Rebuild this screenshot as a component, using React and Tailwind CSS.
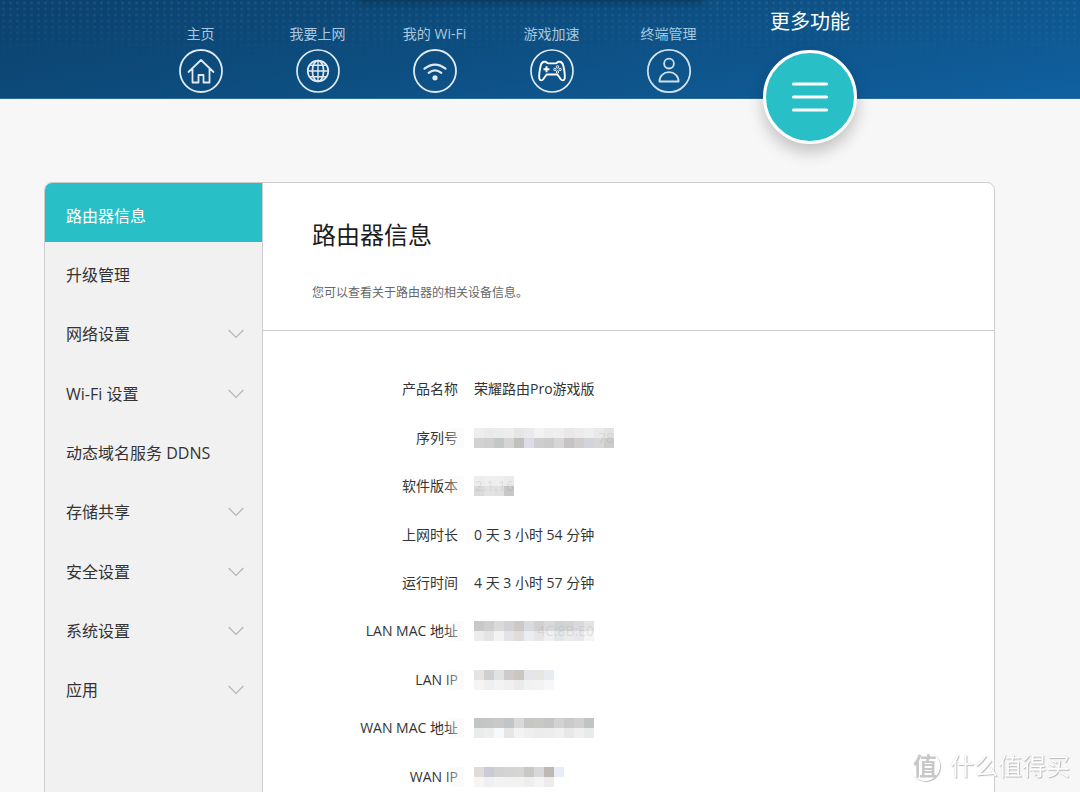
const navItems = [
  { label: '主页', icon: HomeIcon },
  { label: '我要上网', icon: GlobeIcon },
  { label: '我的 Wi-Fi', icon: WifiIcon },
  { label: '游戏加速', icon: GamepadIcon },
  { label: '终端管理', icon: UserIcon },
]

const menu = [
  { label: '路由器信息', active: true },
  { label: '升级管理' },
  { label: '网络设置', children: true },
  { label: 'Wi-Fi 设置', children: true },
  { label: '动态域名服务 DDNS' },
  { label: '存储共享', children: true },
  { label: '安全设置', children: true },
  { label: '系统设置', children: true },
  { label: '应用', children: true },
]

// masked values are drawn as two rows of 10px blocks
const info = [
  { label: '产品名称', value: '荣耀路由Pro游戏版' },
  {
    label: '序列号',
    hint: '78',
    mask: [
      ['#eeeeee', '#eaeaea', '#ececec', '#ededed', '#e6e6e6', '#eaeaea', '#f2f2f2', '#ededed', '#eeeeee', '#e8e8e8', '#ebebeb', '#eeeeee', '#e9e9e9', '#e3e3e3'],
      ['#d2d2d2', '#cfcfcf', '#c3c8c6', '#d5d5d5', '#c2c0bd', '#dcdde8', '#cfcecf', '#cdcbca', '#d6d6d6', '#c6c3c4', '#cfcdce', '#d3d3da', '#d8d6d6', '#cccccc'],
    ],
  },
  {
    label: '软件版本',
    hint: '2.1.16',
    mask: [
      ['#ededed', '#efefef', '#eeeeee', '#ebebeb'],
      ['#dadada', '#e2e2e2', '#e0e0e0', '#c8c8c8'],
    ],
  },
  { label: '上网时长', value: '0 天 3 小时 54 分钟' },
  { label: '运行时间', value: '4 天 3 小时 57 分钟' },
  {
    label: 'LAN MAC 地址',
    hint: '4C:8B:E0',
    mask: [
      ['#c8c8c8', '#cecece', '#dadada', '#d2d2d4', '#cbc8c8', '#d8dadd', '#d0d0d0', '#d9d9d9', '#d0d2d4', '#d4d4d4', '#dadada', '#e4e4e4'],
      ['#ededed', '#e4e4e4', '#f3f3f3', '#e4e4e6', '#e0dcdc', '#ebedf0', '#e6e6e6', '#f0f0f0', '#e2e6e8', '#ebebeb', '#e8e8ec', '#f4f4f4'],
    ],
  },
  {
    label: 'LAN IP',
    mask: [
      ['#e6e3e0', '#cfcfd2', '#e0e3e4', '#cfcbcc', '#cac6c0', '#e4e6ea', '#e6e6e3', '#e8eaf4'],
      ['#f5f5f5', '#efefef', '#f3f3f3', '#f0f0f0', '#ebebeb', '#f2f2f2', '#f3f3f3', '#f7f7fa'],
    ],
  },
  {
    label: 'WAN MAC 地址',
    mask: [
      ['#c2c5c3', '#c4c7c6', '#c8c9c8', '#c3c4c8', '#d9d9dc', '#c6c7c5', '#c8c9c6', '#c5c6c4', '#d2d2d2', '#cacaca', '#d0d0d0', '#c0c4c3'],
      ['#e8eceb', '#eeeeec', '#f7fafa', '#e6e6e6', '#f3f3f3', '#efefef', '#ececec', '#ededed', '#f0f0f0', '#e6e9e8', '#efefef', '#e8ebea'],
    ],
  },
  {
    label: 'WAN IP',
    mask: [
      ['#e0dcd9', '#cacbd6', '#d2d2d2', '#d4d4d2', '#d5d5d5', '#c8c8c4', '#d8d8dc', '#beb9b5', '#e9edf8'],
      ['#f6f6f4', '#f0f0f3', '#f3f3f3', '#f2f2f2', '#f2f2f2', '#eeefec', '#f4f4f4', '#ececec', '#ffffff'],
    ],
  },
]

function HomeIcon() {
  return (
    <svg viewBox="0 0 46 46" className="size-[46px]" fill="none" stroke="#dfeaf3" strokeWidth="1.8">
      <circle cx="23" cy="23" r="21" />
      <path d="M10.500 24 L23 12 L35.500 24 M14.500 21 V34.500 H20.500 V27 H25.500 V34.500 H31.500 V21" strokeLinecap="round" strokeLinejoin="round" />
    </svg>
  )
}

function GlobeIcon() {
  return (
    <svg viewBox="0 0 46 46" className="size-[46px]" fill="none" stroke="#dfeaf3" strokeWidth="1.7">
      <circle cx="23" cy="23" r="21" />
      <circle cx="23" cy="23" r="10.300" />
      <ellipse cx="23" cy="23" rx="5.600" ry="10.300" />
      <path d="M23 12.700 V33.300 M12.700 23 H33.300 M14.500 17.200 H31.500 M14.500 28.800 H31.500" strokeWidth="1.400" />
    </svg>
  )
}

function WifiIcon() {
  return (
    <svg viewBox="0 0 46 46" className="size-[46px]" fill="none" stroke="#dfeaf3" strokeWidth="1.8">
      <circle cx="23" cy="23" r="21" />
      <path d="M12.500 20.700 Q23 12.500 33.500 20.700 M16.700 24.800 Q23 20 29.300 24.800" strokeWidth="2.200" strokeLinecap="round" />
      <circle cx="23" cy="29.800" r="2.600" fill="#dfeaf3" stroke="none" />
    </svg>
  )
}

function GamepadIcon() {
  return (
    <svg viewBox="0 0 46 46" className="size-[46px]" fill="none" stroke="#dfeaf3" strokeWidth="1.7">
      <circle cx="23" cy="23" r="21" />
      <path d="M16.500 13.800 C13.500 13.300 12.300 14.800 11.600 18 C10.500 23 9.900 27.500 10.300 30.300 C10.700 32.800 13 33 14.400 31 L17.600 26.500 H28.400 L31.600 31 C33 33 35.300 32.800 35.700 30.300 C36.100 27.500 35.500 23 34.400 18 C33.700 14.800 32.500 13.300 29.500 13.800 C28.500 14 28 15.400 26.800 15.400 H19.200 C18 15.400 17.500 14 16.500 13.800 Z" stroke="#fff" strokeWidth="1.900" strokeLinejoin="round" />
      <path d="M17.500 18.300 V24.300 M14.500 21.300 H20.500" stroke="#fff" strokeWidth="2" />
      <g fill="none" stroke="#fff" strokeWidth="1">
        <circle cx="28.500" cy="18.800" r="1.200" />
        <circle cx="28.500" cy="24" r="1.200" />
        <circle cx="25.900" cy="21.400" r="1.200" />
        <circle cx="31.100" cy="21.400" r="1.200" />
      </g>
    </svg>
  )
}

function UserIcon() {
  return (
    <svg viewBox="0 0 46 46" className="size-[46px]" fill="none" stroke="#cfdfec" strokeWidth="1.8">
      <circle cx="23" cy="23" r="21.200" />
      <circle cx="23" cy="15.600" r="4.900" />
      <path d="M13.400 33.500 C13.400 28 17.500 24.200 23 24.200 C28.500 24.200 32.600 28 32.600 33.500 Z" strokeLinejoin="round" />
    </svg>
  )
}

function Mask({ rows, hint }) {
  const width = rows[0].length * 10
  return (
    <span className="relative block">
      <svg width={width} height="20" viewBox={`0 0 ${width} 20`} shapeRendering="crispEdges" aria-hidden="true">
        {rows.map((row, y) => row.map((color, x) => (
          <rect key={x + '-' + y} x={x * 10} y={y * 10} width="10" height="10" fill={color} />
        )))}
      </svg>
      {hint && <span className="absolute right-0 top-0 leading-5 text-[#8a8f93]/20">{hint}</span>}
    </span>
  )
}

export default function App() {
  return (
    <div className="h-screen overflow-hidden flex flex-col bg-[#f7f7f7] text-[#333] font-['Open_Sans','Noto_Sans_CJK_SC',sans-serif]">
      <header className="relative h-[99px] shrink-0 border-b border-[#2a6a9c] bg-[linear-gradient(168deg,#0b416d_0%,#0d4e80_45%,#1060a0_100%)]">
        <div className="absolute inset-x-0 top-0 h-16 bg-[radial-gradient(circle,rgba(120,180,220,0.13)_1px,transparent_2px)] bg-[size:7px_6px] [mask-image:linear-gradient(#000,transparent)]" />
        <div className="absolute inset-x-0 top-0 h-3 overflow-hidden">
          <div className="absolute left-1/3 right-[35%] -top-2 h-2 shadow-[0_0_10px_1px_rgba(10,40,60,0.7)]" />
        </div>
        <nav className="relative flex pl-[142px]">
          {navItems.map(({ label, icon: Icon }) => (
            <a key={label} href="#" className="w-[117px] pt-6 flex flex-col items-center text-sm leading-5 text-[#a9c8de]">
              {label}
              <span className="mt-1"><Icon /></span>
            </a>
          ))}
          <a href="#" className="w-[166px] pt-2 flex flex-col items-center text-xl leading-7 text-white">
            更多功能
            <span className="mt-3.5 size-[94px] rounded-full border-3 border-white bg-[#29bfc7] flex items-center justify-center shadow-[0_8px_16px_rgba(0,0,0,0.22)]">
              <svg width="36" height="30" viewBox="0 0 36 30" stroke="#fff" strokeWidth="3" strokeLinecap="round">
                <path d="M1.500 2 H34.500 M1.500 15 H34.500 M1.500 28 H34.500" />
              </svg>
            </span>
          </a>
        </nav>
      </header>

      <main className="grow shrink-0 pt-[83px] pl-11 pr-[85px]">
        <div className="flex rounded-lg border border-[#ccc] bg-white overflow-hidden">
          <aside className="w-[218px] shrink-0 border-r border-[#ccc] bg-[#f1f1f1]">
            <ul className="h-[534px] flex flex-col">
              {menu.map((item) => (
                <li key={item.label} className="flex-1">
                  <a href="#" className={item.active ? 'h-full pt-1.5 pl-[21px] pr-[18px] flex items-center justify-between bg-[#29bfc7] text-white' : 'h-full pt-1.5 pl-[21px] pr-[18px] flex items-center justify-between'}>
                    {item.label}
                    {item.children && (
                      <svg width="16" height="10" viewBox="0 0 16 10" fill="none" stroke="#b5b5b5" strokeWidth="1.2">
                        <path d="M.700 1 L8 8.500 L15.300 1" />
                      </svg>
                    )}
                  </a>
                </li>
              ))}
            </ul>
          </aside>

          <section className="flex-1">
            <div className="h-[148px] pt-8 px-[49px] border-b border-[#ccc]">
              <h1 className="text-2xl leading-10 text-[#1c1c1c]">路由器信息</h1>
              <p className="mt-7 text-xs leading-5 text-[#666]">您可以查看关于路由器的相关设备信息。</p>
            </div>
            <dl className="h-[470px] pt-[34px] flex flex-col text-sm">
              {info.map((row) => (
                <div key={row.label} className="flex-1 flex items-center gap-4">
                  <dt className="relative w-[195px] shrink-0 text-right leading-5">
                    {row.label}
                    {row.mask && <span className="absolute -right-1.5 top-0 h-5 w-5 bg-[linear-gradient(90deg,transparent,rgba(245,245,245,0.4)_50%,rgba(248,248,250,0.6))]" />}
                  </dt>
                  <dd>{row.mask ? <Mask rows={row.mask} hint={row.hint} /> : row.value}</dd>
                </div>
              ))}
            </dl>
          </section>
        </div>
      </main>

      <div className="fixed right-2.5 bottom-2 flex items-center gap-2.5 text-2xl leading-9 text-white [text-shadow:1px_1px_1px_#bbb,0_0_1px_#ccc]">
        <span className="size-[30px] rounded-full border border-white flex items-center justify-center text-2xl font-bold text-[#c8c8c8] shadow-[1px_1px_1px_#bbb] [text-shadow:none]">值</span>
        什么值得买
      </div>
    </div>
  )
}
